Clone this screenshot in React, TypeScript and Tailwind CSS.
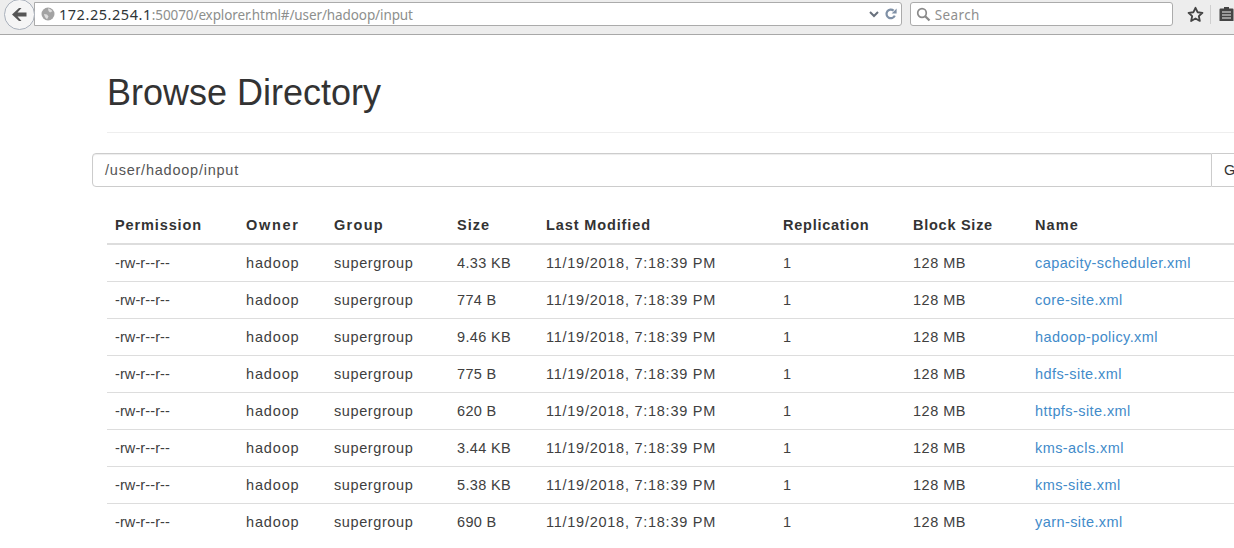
const files = [
  ["4.33 KB", "capacity-scheduler.xml"],
  ["774 B", "core-site.xml"],
  ["9.46 KB", "hadoop-policy.xml"],
  ["775 B", "hdfs-site.xml"],
  ["620 B", "httpfs-site.xml"],
  ["3.44 KB", "kms-acls.xml"],
  ["5.38 KB", "kms-site.xml"],
  ["690 B", "yarn-site.xml"],
];

const headers = [
  { label: "Permission", track: "tracking-[0.88px]" },
  { label: "Owner", track: "tracking-[1.7px]" },
  { label: "Group", track: "tracking-[1.3px]" },
  { label: "Size", track: "tracking-[1px]" },
  { label: "Last Modified", track: "tracking-[0.88px]" },
  { label: "Replication", track: "tracking-[0.75px]" },
  { label: "Block Size", track: "tracking-[0.74px]" },
  { label: "Name", track: "tracking-[1.1px]" },
];

function Toolbar() {
  return (
    <div className="h-[35px] shrink-0 flex items-start bg-[#ededed] border-b border-[#a8a8a8] font-['Noto_Sans',sans-serif]">
      <div className="ml-[4px] -mt-[1px] w-[31px] h-[31px] z-10 rounded-full bg-[#f5f5f5] border border-[#a9b0bb] flex items-center justify-center">
        <svg width="16" height="15" viewBox="0 0 16 14" className="shrink-0">
          <path d="M8 0.5 1 7l7 6.5h2.5L6.5 9H15.5V5H6.5L10.5 0.5z" fill="#555555" />
        </svg>
      </div>
      <div className="-ml-[1px] mt-[2px] h-[24px] w-[870px] bg-white border border-[#ababab] rounded-r-[3px] flex items-center">
        <svg width="14" height="14" viewBox="0 0 14 14" className="ml-[6px] shrink-0">
          <circle cx="7" cy="7" r="6.5" fill="#a3a3a3" />
          <path d="M7 1.5c2 .2 3.6 1.3 4.4 2.8L9 5.5 7.5 4zM3 7l3 .6 1.5 2-1.4 2.6C4.4 11 3.2 9.2 3 7z" fill="#dedede" />
        </svg>
        <span className="ml-[4px] pt-[1px] text-[14.5px] leading-[22px] whitespace-nowrap text-[#2e3436] tracking-[0.55px]">
          172.25.254.1<span className="text-[13.5px] text-[#8d8f8d] tracking-[-0.1px]">:50070/explorer.html#/user/hadoop/input</span>
        </span>
        <svg width="10" height="7" viewBox="0 0 10 7" className="ml-auto shrink-0">
          <path d="M1 1l4 4 4-4" fill="none" stroke="#68707c" strokeWidth="2" />
        </svg>
        <svg width="12" height="12" viewBox="0 0 12 12" className="ml-[6px] mr-[4px] shrink-0">
          <path d="M9.8 7.6A4.3 4.3 0 1 1 8.6 2.6" fill="none" stroke="#7f90a6" strokeWidth="2.2" />
          <path d="M6.6 5.4H11.6V0.4z" fill="#7f90a6" />
        </svg>
      </div>
      <div className="ml-[8px] mt-[2px] h-[24px] w-[264px] bg-white border border-[#ababab] rounded-[3px] flex items-center">
        <svg width="15" height="15" viewBox="0 0 15 15" className="ml-[5px] shrink-0">
          <circle cx="6" cy="6" r="4.3" fill="none" stroke="#8a8a8a" strokeWidth="1.7" />
          <path d="M9.2 9.2l4.3 4.3" stroke="#8a8a8a" strokeWidth="2.3" />
        </svg>
        <span className="ml-[4px] pt-[1px] text-[13.5px] leading-[22px] tracking-[0.4px] text-[#8f8f8f]">Search</span>
      </div>
      <svg width="17" height="17" viewBox="0 0 24 24" className="ml-[14px] mt-[6px] shrink-0">
        <path d="M12 2.5l2.9 6.3 6.9.8-5.1 4.7 1.4 6.8-6.1-3.4-6.1 3.4 1.4-6.8L2.2 9.6l6.9-.8z" fill="none" stroke="#444444" strokeWidth="2.6" strokeLinejoin="round" />
      </svg>
      <div className="ml-[6px] mt-[5px] h-[19px] w-px bg-[#cfcfcf]" />
      <svg width="15" height="16" viewBox="0 0 15 16" className="ml-[8px] mt-[6px] shrink-0">
        <path d="M1.5 2.5h3.5V1h5v1.5h3.5a1 1 0 0 1 1 1V15H.5V3.5a1 1 0 0 1 1-1z" fill="#444444" />
        <path d="M3 6h9M3 9h9M3 12h9" stroke="#ededed" strokeWidth="1.2" />
      </svg>
    </div>
  );
}

export default function App() {
  return (
    <div className="h-[548px] w-[1234px] overflow-hidden bg-white flex flex-col font-['Liberation_Sans',sans-serif] text-[#333]">
      <Toolbar />
      <main className="pl-[92px] w-[1500px]">
        <div className="pl-[15px] pt-[38px] pb-[19px]">
          <h1 className="text-[36px] leading-[40px] font-normal text-[#333]">Browse Directory</h1>
        </div>
        <div className="ml-[15px] h-px bg-[#eeeeee]" />
        <div className="mt-[20px] flex h-[34px] text-[14.5px]">
          <div className="w-[1120px] border border-[#cccccc] rounded-l-[4px] px-[12px] pt-[1px] flex items-center text-[#555] tracking-[0.77px] shadow-[inset_0_1px_1px_rgba(0,0,0,0.075)]">
            /user/hadoop/input
          </div>
          <div className="w-[60px] border border-l-0 border-[#cccccc] px-[12px] pt-[1px] flex items-center">Go!</div>
        </div>
        <table className="ml-[15px] mt-[20px] table-fixed border-collapse text-[14.5px] text-[#404040] w-[1300px]">
          <colgroup>
            <col className="w-[131px]" />
            <col className="w-[88px]" />
            <col className="w-[123px]" />
            <col className="w-[89px]" />
            <col className="w-[237px]" />
            <col className="w-[130px]" />
            <col className="w-[122px]" />
            <col />
          </colgroup>
          <thead>
            <tr className="border-b-2 border-[#dddddd]">
              {headers.map((h) => (
                <th key={h.label} className={`px-[8px] pt-[2px] h-[37px] text-left font-bold text-[#333] whitespace-nowrap ${h.track}`}>
                  {h.label}
                </th>
              ))}
            </tr>
          </thead>
          <tbody>
            {files.map(([size, name]) => (
              <tr key={name} className="border-b border-[#dddddd] last:border-b-0">
                <td className="px-[8px] pt-[2px] h-[37px] tracking-[0.1px]">-rw-r--r--</td>
                <td className="px-[8px] pt-[2px] tracking-[0.85px]">hadoop</td>
                <td className="px-[8px] pt-[2px] tracking-[0.6px]">supergroup</td>
                <td className="px-[8px] pt-[2px] tracking-[0.34px]">{size}</td>
                <td className="px-[8px] pt-[2px] tracking-[0.74px]">11/19/2018, 7:18:39 PM</td>
                <td className="px-[8px] pt-[2px]">1</td>
                <td className="px-[8px] pt-[2px] tracking-[0.5px]">128 MB</td>
                <td className="px-[8px] pt-[2px] text-[#428bca] tracking-[0.42px] whitespace-nowrap">{name}</td>
              </tr>
            ))}
          </tbody>
        </table>
      </main>
    </div>
  );
}
